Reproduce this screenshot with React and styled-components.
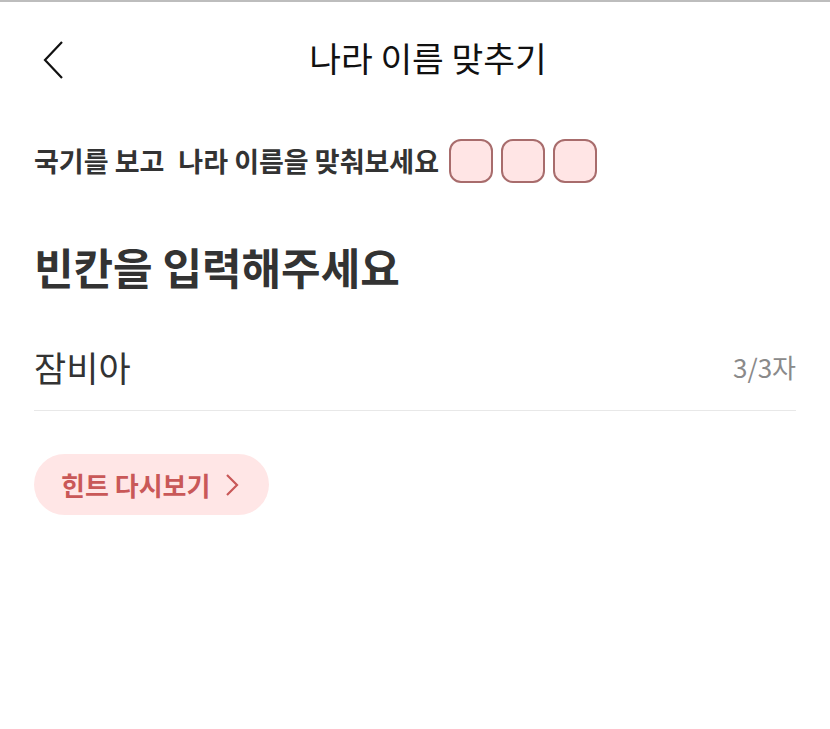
import React, { useState } from 'react'
import styled, { createGlobalStyle } from 'styled-components'

const GlobalStyle = createGlobalStyle`
  html, body {
    margin: 0;
    padding: 0;
    background: #ffffff;
  }
  body {
    font-family: "Noto Sans CJK KR", "Noto Sans", sans-serif;
    color: #333333;
  }
`;

const Page = styled.div`
  width: 830px;
  min-height: 729px;
  border-top: 2px solid #bdbdbd;
  box-sizing: border-box;
`;

const Header = styled.header`
  position: relative;
  height: 114px;
  display: flex;
  align-items: center;
  justify-content: center;
`;

const BackButton = styled.button`
  position: absolute;
  left: 38px;
  top: 37px;
  width: 30px;
  height: 42px;
  padding: 0;
  border: none;
  background: none;
  display: flex;
  align-items: center;
  justify-content: center;
  cursor: pointer;
`;

const Title = styled.h1`
  margin: 0 0 2px 26px;
  font-size: 34.5px;
  line-height: 1.2;
  font-weight: 400;
  color: #111111;
`;

const Content = styled.main`
  padding: 0 34px;
`;

const HintRow = styled.div`
  margin-top: 23px;
  display: flex;
  align-items: center;
  gap: 8px;
`;

const HintText = styled.p`
  margin: 0 2px 0 0;
  font-size: 27px;
  line-height: 44px;
  font-weight: 700;
  color: #333333;
  white-space: pre;
`;

const Gap = styled.span`
  display: inline-block;
  width: 14px;
`;

const Blank = styled.span`
  width: 44px;
  height: 44px;
  box-sizing: border-box;
  border: 2px solid #a86c6c;
  border-radius: 12px;
  background: #ffe5e5;
`;

const Heading = styled.h2`
  margin: 56px 0 0;
  font-size: 43px;
  line-height: 54px;
  font-weight: 700;
  color: #333333;
`;

const InputRow = styled.label`
  margin-top: 48px;
  display: flex;
  align-items: center;
  justify-content: space-between;
  padding-bottom: 19px;
  border-bottom: 1px solid #e8e8e8;
`;

const AnswerInput = styled.input`
  flex: 1;
  min-width: 0;
  border: none;
  outline: none;
  padding: 0;
  height: 50px;
  font-family: inherit;
  font-size: 35px;
  color: #333333;
  background: transparent;
`;

const Counter = styled.span`
  font-size: 26px;
  color: #8a8a8a;
`;

const HintButton = styled.button`
  margin-top: 43px;
  height: 61px;
  padding: 0 30px 0 27px;
  border: none;
  border-radius: 31px;
  background: #ffe6e6;
  display: inline-flex;
  align-items: center;
  gap: 15px;
  font-family: inherit;
  font-size: 26px;
  font-weight: 700;
  color: #c95858;
  cursor: pointer;
`;

const App = () => {
  const [answer, setAnswer] = useState('잠비아');

  return (
    <Page>
      <GlobalStyle />
      <Header>
        <BackButton aria-label="뒤로">
          <svg width="22" height="40" viewBox="0 0 22 40" fill="none">
            <path d="M20 2 L3 20 L20 38" stroke="#111" strokeWidth="2.2" />
          </svg>
        </BackButton>
        <Title>나라 이름 맞추기</Title>
      </Header>

      <Content>
        <HintRow>
          <HintText>국기를 보고<Gap />나라 이름을 맞춰보세요</HintText>
          <Blank />
          <Blank />
          <Blank />
        </HintRow>

        <Heading>빈칸을 입력해주세요</Heading>

        <InputRow>
          <AnswerInput value={answer} maxLength={3} onChange={(e) => setAnswer(e.target.value)} />
          <Counter>{answer.length}/3자</Counter>
        </InputRow>

        <HintButton>
          힌트 다시보기
          <svg width="14" height="24" viewBox="0 0 14 24" fill="none">
            <path d="M2 2 L12 12 L2 22" stroke="#c95858" strokeWidth="2.2" />
          </svg>
        </HintButton>
      </Content>
    </Page>
  )
}

export default App
